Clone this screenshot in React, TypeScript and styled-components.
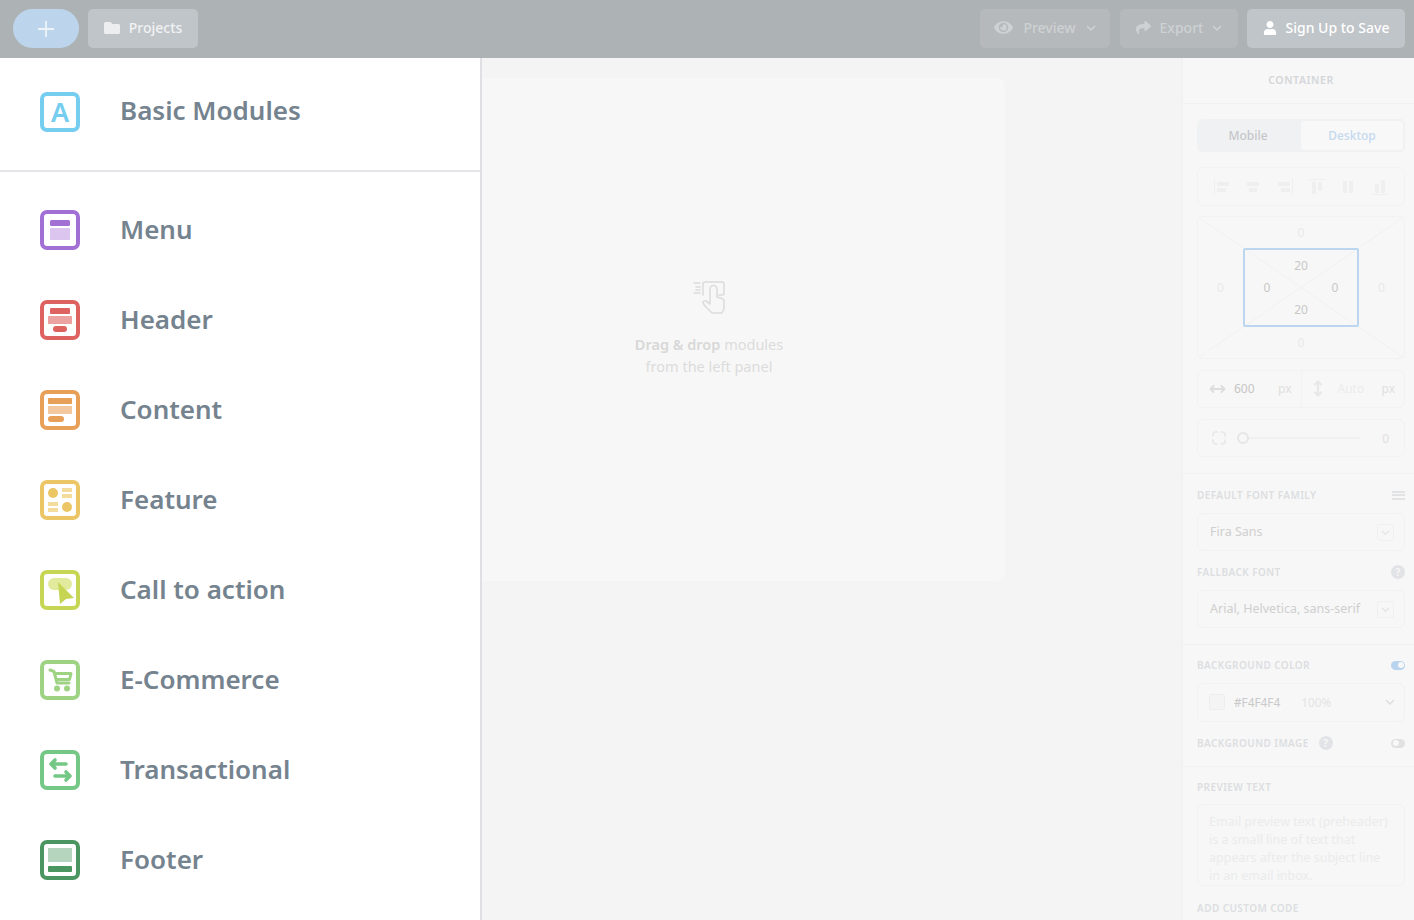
import * as React from "react"
import styled, { createGlobalStyle } from "styled-components"
import { FaEye, FaFolder, FaShare, FaUser } from "react-icons/fa"

const GlobalStyle = createGlobalStyle`
  html, body {
    margin: 0;
    height: 100%;
    overflow: hidden;
    background: #f4f4f4;
    font-family: "Noto Sans", "Open Sans", sans-serif;
  }
  * { box-sizing: border-box; }
`

const Page = styled.div`
  position: relative;
  width: 1414px;
  height: 920px;
  overflow: hidden;
  display: flex;
  flex-direction: column;
`

const TopBar = styled.header`
  height: 58px;
  flex: none;
  background: #adb2b5;
  display: flex;
  align-items: center;
  padding: 0 9px 1px 13px;
`

const PlusButton = styled.div`
  width: 66px;
  height: 39px;
  border-radius: 20px;
  background: #bdd5ec;
  display: flex;
  align-items: center;
  justify-content: center;
  margin-right: 9px;
`

const BarButton = styled.div<{ $w: number; $tone: "on" | "off"; $strong?: boolean; $gap?: number }>`
  width: ${(p) => p.$w}px;
  height: 39px;
  border-radius: 5px;
  padding-bottom: 2px;
  display: flex;
  align-items: center;
  justify-content: center;
  gap: ${(p) => p.$gap ?? 9}px;
  font-size: 14px;
  font-weight: 500;
  background: ${(p) => (p.$tone === "on" ? "#c0c5c9" : "#b5b9bc")};
  color: ${(p) => (p.$strong ? "#fff" : p.$tone === "on" ? "#f1f2f3" : "#ced1d3")};
`

const BarSpacer = styled.div`
  flex: 1;
`

const BarGap = styled.div<{ $w: number }>`
  width: ${(p) => p.$w}px;
`

const Workspace = styled.div`
  flex: 1;
  display: flex;
  min-height: 0;
`

const Canvas = styled.main`
  flex: 1;
  background: #f4f4f4;
  padding: 20px 0 0 237px;
  display: flex;
  justify-content: center;
  align-items: flex-start;
`

const EmailCard = styled.div`
  width: 592px;
  height: 503px;
  border-radius: 8px;
  background: #f7f7f7;
  padding-top: 202px;
  display: flex;
  flex-direction: column;
  align-items: center;
`

const DropText = styled.p`
  margin: 19px 0 0;
  text-align: center;
  font-size: 14.5px;
  line-height: 22px;
  color: #dcdcdc;
  b { font-weight: 600; color: #d8d8d8; }
`

const Drawer = styled.aside`
  position: absolute;
  left: 0;
  top: 58px;
  bottom: 0;
  width: 482px;
  background: #fff;
  border-right: 2px solid #dfe0e3;
`

const DrawerHead = styled.div`
  height: 114px;
  padding: 0 0 5px 40px;
  display: flex;
  align-items: center;
  gap: 40px;
  border-bottom: 2px solid #e5e5e9;
`

const ModuleList = styled.div`
  padding-top: 13px;
`

const ModuleRow = styled.div`
  height: 90px;
  padding-left: 40px;
  display: flex;
  align-items: center;
  gap: 40px;
`

const ModuleName = styled.span`
  font-size: 26px;
  font-weight: 600;
  padding-bottom: 3px;
  color: #75838f;
`

const Inspector = styled.aside`
  width: 233px;
  flex: none;
  background: #f7f7f7;
  border-left: 2px solid #f2f2f2;
  display: flex;
  flex-direction: column;
`

const InspectorTitle = styled.div`
  height: 46px;
  flex: none;
  display: flex;
  align-items: center;
  justify-content: center;
  padding: 0 0 2px 5px;
  font-size: 10.5px;
  font-weight: 600;
  letter-spacing: 0.6px;
  color: #d4d6d9;
  border-bottom: 1px solid #f1f1f1;
`

const Section = styled.section<{ $top: number; $bottom: number }>`
  padding: ${(p) => p.$top}px 9px ${(p) => p.$bottom}px 14px;
  border-bottom: 1px solid #f1f1f1;
  &:last-child { border-bottom: 0; }
`

const Tabs = styled.div`
  height: 33px;
  display: flex;
  border-radius: 6px;
  background: #f0f1f3;
`

const Tab = styled.div<{ $active?: boolean }>`
  flex: 1;
  display: flex;
  align-items: center;
  justify-content: center;
  padding-bottom: 1px;
  font-size: 12px;
  font-weight: 500;
  border-radius: 5px;
  color: ${(p) => (p.$active ? "#c5d9ef" : "#c4c6c9")};
  background: ${(p) => (p.$active ? "#f8f8f8" : "transparent")};
  border: ${(p) => (p.$active ? "2px solid #f0f1f3" : "0")};
`

const Frame = styled.div<{ $h: number; $mt: number }>`
  height: ${(p) => p.$h}px;
  margin-top: ${(p) => p.$mt}px;
  border: 1px solid #f2f2f2;
  border-radius: 6px;
  display: flex;
  align-items: center;
`

const AlignRow = styled(Frame)`
  justify-content: space-around;
  padding: 0 8px;
`

const BoxModel = styled(Frame)`
  position: relative;
  display: grid;
  grid-template-columns: 45px 116px 1fr;
  grid-template-rows: 31px 79px 1fr;
  align-items: center;
  justify-items: center;
`

const Diagonals = styled.svg`
  position: absolute;
  inset: 0;
  width: 100%;
  height: 100%;
`

const FaintNum = styled.span<{ $col: number; $row: number }>`
  grid-column: ${(p) => p.$col};
  grid-row: ${(p) => p.$row};
  font-size: 12px;
  color: #e9e9e9;
  z-index: 1;
`

const InnerBox = styled.div`
  grid-column: 2;
  grid-row: 2;
  width: 100%;
  height: 100%;
  z-index: 1;
  border: 2px solid #bdd6f0;
  border-radius: 2px;
  display: grid;
  grid-template-columns: 44px 1fr 44px;
  grid-template-rows: 1fr 1fr 1fr;
  padding: 4px 0;
  align-items: center;
  justify-items: center;
`

const BoxNum = styled.span<{ $col: number; $row: number }>`
  grid-column: ${(p) => p.$col};
  grid-row: ${(p) => p.$row};
  font-size: 12px;
  color: #c8c8c8;
`

const SizeCell = styled.div<{ $divider?: boolean }>`
  flex: 1;
  height: 100%;
  display: flex;
  align-items: center;
  gap: ${(p) => (p.$divider ? 15 : 8)}px;
  padding: 0 9px 1px 11px;
  border-left: ${(p) => (p.$divider ? "1px solid #f2f2f2" : "0")};
`

const SizeValue = styled.span<{ $faint?: boolean }>`
  flex: 1;
  font-size: 12px;
  color: ${(p) => (p.$faint ? "#ececec" : "#c6c6c6")};
`

const SizeUnit = styled.span`
  font-size: 12px;
  color: #e0e0e0;
`

const RadiusRow = styled(Frame)`
  padding: 0 15px 0 14px;
`

const SliderTrack = styled.div`
  position: relative;
  flex: 1;
  height: 2px;
  margin: 0 22px 0 11px;
  background: #f0f0f0;
`

const SliderKnob = styled.div`
  position: absolute;
  left: 0;
  top: -5px;
  width: 12px;
  height: 12px;
  border-radius: 50%;
  background: #f7f7f7;
  border: 2px solid #e6e6e6;
`

const LabelRow = styled.div<{ $mt?: number }>`
  height: 14px;
  margin-top: ${(p) => p.$mt ?? 0}px;
  display: flex;
  align-items: center;
  justify-content: space-between;
`

const LabelGroup = styled.div`
  display: flex;
  align-items: center;
  gap: 10px;
`

const Label = styled.span`
  font-size: 10px;
  font-weight: 600;
  letter-spacing: 0.42px;
  color: #dcdee1;
  white-space: nowrap;
`

const HelpDot = styled.span`
  width: 14px;
  height: 14px;
  border-radius: 50%;
  background: #e2e3e6;
  color: #f7f7f7;
  font-size: 10px;
  font-weight: 700;
  display: flex;
  align-items: center;
  justify-content: center;
`

const MenuLines = styled.span`
  width: 13px;
  height: 9px;
  border-top: 2px solid #e2e3e5;
  border-bottom: 2px solid #e2e3e5;
  position: relative;
  &::after {
    content: "";
    position: absolute;
    left: 0;
    right: 0;
    top: 1.5px;
    height: 2px;
    background: #e2e3e5;
  }
`

const Select = styled.div`
  height: 38px;
  margin-top: 11px;
  border: 1px solid #f2f2f2;
  border-radius: 6px;
  padding: 0 10px 0 12px;
  display: flex;
  align-items: center;
  justify-content: space-between;
  font-size: 12.5px;
  color: #cfcfcf;
  white-space: nowrap;
  line-height: 15px;
  span:first-child { padding-bottom: 2px; }
`

const Caret = styled.span`
  width: 17px;
  height: 17px;
  border: 1px solid #f0f0f0;
  border-radius: 3px;
  display: flex;
  align-items: center;
  justify-content: center;
`

const ColorField = styled.div`
  height: 39px;
  margin-top: 11px;
  border: 1px solid #f2f2f2;
  border-radius: 6px;
  padding: 0 9px 2px 11px;
  display: flex;
  align-items: center;
  font-size: 11.8px;
  color: #c9c9c9;
`

const Swatch = styled.span`
  width: 16px;
  height: 16px;
  margin-right: 9px;
  border: 1px solid #eeeeee;
  border-radius: 2px;
  background: #f4f4f4;
`

const Opacity = styled.span`
  flex: 1;
  margin-left: 21px;
  color: #e4e4e4;
`

const Toggle = styled.span<{ $on?: boolean }>`
  width: 14px;
  height: 9px;
  border-radius: 5px;
  background: ${(p) => (p.$on ? "#b9d4ef" : "#e0e1e3")};
  display: flex;
  align-items: center;
  justify-content: ${(p) => (p.$on ? "flex-end" : "flex-start")};
  padding: 0 1.5px;
  &::after {
    content: "";
    width: 6px;
    height: 6px;
    border-radius: 50%;
    background: #f7f7f7;
  }
`

const PreviewArea = styled.div`
  height: 82px;
  margin: 10px 0 15px;
  padding: 8px 11px 0;
  border: 1px solid #f2f2f2;
  border-radius: 6px;
  font-size: 12.5px;
  line-height: 18px;
  color: #ebebeb;
  overflow: hidden;
`

const Chevron = ({ color, size = 10 }: { color: string; size?: number }) => (
  <svg width={size} height={size} viewBox="0 0 10 10" fill="none">
    <path d="M1.5 3.5 5 7l3.5-3.5" stroke={color} strokeWidth="1.6" strokeLinecap="round" strokeLinejoin="round" />
  </svg>
)

const IconShell = ({ color, children }: { color: string; children: React.ReactNode }) => (
  <svg width="40" height="40" viewBox="0 0 40 40" style={{ flex: "none" }}>
    <rect x="2" y="2" width="36" height="36" rx="5" fill="#fff" stroke={color} strokeWidth="4" />
    {children}
  </svg>
)

const modules: { name: string; color: string; icon: React.ReactNode }[] = [
  {
    name: "Menu",
    color: "#a26fd4",
    icon: (
      <>
        <rect x="10" y="10" width="20" height="6" rx="1.5" fill="#a26fd4" />
        <rect x="10" y="18" width="20" height="12" fill="#dcc5ee" />
      </>
    ),
  },
  {
    name: "Header",
    color: "#de6360",
    icon: (
      <>
        <rect x="10" y="8" width="20" height="6" rx="1" fill="#de6360" />
        <rect x="8" y="16" width="24" height="8" fill="#eca2a0" />
        <rect x="13" y="26" width="14" height="6" rx="3" fill="#de6360" />
      </>
    ),
  },
  {
    name: "Content",
    color: "#e89f58",
    icon: (
      <>
        <rect x="8" y="8" width="24" height="6" rx="1" fill="#e89f58" />
        <rect x="8" y="16" width="24" height="8" fill="#f3c79f" />
        <rect x="8" y="26" width="16" height="6" rx="3" fill="#e89f58" />
      </>
    ),
  },
  {
    name: "Feature",
    color: "#ecc564",
    icon: (
      <>
        <circle cx="13" cy="13" r="5" fill="#ecc564" />
        <rect x="22" y="8" width="10" height="4" fill="#f4dc9c" />
        <rect x="22" y="14" width="10" height="4" fill="#f4dc9c" />
        <rect x="8" y="22" width="10" height="4" fill="#f4dc9c" />
        <rect x="8" y="28" width="10" height="4" fill="#f4dc9c" />
        <circle cx="27" cy="27" r="5" fill="#ecc564" />
      </>
    ),
  },
  {
    name: "Call to action",
    color: "#c6d654",
    icon: (
      <>
        <rect x="8" y="8" width="24" height="12" rx="6" fill="#e2ea9e" />
        <path d="M18 12 34 28l-8 1-6 5z" fill="#c6d654" />
      </>
    ),
  },
  {
    name: "E-Commerce",
    color: "#9ed384",
    icon: (
      <>
        <path d="M10 10l4 1.500 3 11.500h12" fill="none" stroke="#9ed384" strokeWidth="3" strokeLinecap="round" strokeLinejoin="round" />
        <path d="M15 13.500h16l-1.500 6H16.500" fill="none" stroke="#9ed384" strokeWidth="3" strokeLinejoin="round" />
        <circle cx="17" cy="28.500" r="3" fill="#9ed384" />
        <circle cx="27" cy="28.500" r="3" fill="#9ed384" />
      </>
    ),
  },
  {
    name: "Transactional",
    color: "#74c785",
    icon: (
      <g fill="none" stroke="#74c785" strokeWidth="3.6" strokeLinecap="round" strokeLinejoin="round">
        <path d="M11 14h15M15 10l-4 4 4 4" />
        <path d="M30 26H15M26 22l4 4-4 4" />
      </g>
    ),
  },
  {
    name: "Footer",
    color: "#4b9560",
    icon: (
      <>
        <rect x="8" y="8" width="24" height="14" fill="#b6d5bf" />
        <rect x="8" y="26" width="24" height="6" rx="1" fill="#4b9560" />
      </>
    ),
  },
]

const alignIcons = [
  "M0 0h1v16H0zM3 3h12v4H3zM3 9h9v4H3z",
  "M2 3h12v4H2zM4 9h8v4H4z",
  "M15 0h1v16h-1zM1 3h12v4H1zM4 9h9v4H4z",
  "M0 0h16v1H0zM3 3h4v12H3zM9 3h4v9H9z",
  "M3 2h4v12H3zM9 2h4v12H9z",
  "M0 15h16v1H0zM3 5h4v9H3zM9 1h4v13H9z",
]

const App = () => (
  <Page>
    <GlobalStyle />
    <TopBar>
      <PlusButton>
        <svg width="18" height="18" viewBox="0 0 18 18">
          <path d="M9 1v16M1 9h16" stroke="#eef3f8" strokeWidth="1.8" />
        </svg>
      </PlusButton>
      <BarButton $w={110} $tone="on">
        <FaFolder size={16} color="#eceeef" />
        Projects
      </BarButton>
      <BarSpacer />
      <BarButton $w={130} $tone="off" $gap={10}>
        <FaEye size={19} color="#ced1d3" />
        Preview
        <Chevron color="#ced1d3" />
      </BarButton>
      <BarGap $w={10} />
      <BarButton $w={118} $tone="off">
        <FaShare size={15} color="#ced1d3" />
        Export
        <Chevron color="#ced1d3" />
      </BarButton>
      <BarGap $w={9} />
      <BarButton $w={158} $tone="on" $strong>
        <FaUser size={14} color="#fff" />
        Sign Up to Save
      </BarButton>
    </TopBar>

    <Workspace>
      <Canvas>
        <EmailCard>
          <svg width="34" height="34" viewBox="0 0 34 34" fill="none" stroke="#dcdcdc" strokeWidth="1.6" strokeLinecap="round" strokeLinejoin="round">
            <path d="M2 3h6M4 7h4M2 13h6M4 10h4" />
            <path d="M11 15V4a2 2 0 0 1 2-2h17a2 2 0 0 1 2 2v9a2 2 0 0 1-2 2h-3" />
            <path d="M18 24V9a3.500 3.500 0 0 1 7 0v8l6 2a2 2 0 0 1 1 2v8l-2 4H20l-7-7-2-3a2 2 0 0 1 3-2l4 3z" fill="#f7f7f7" />
          </svg>
          <DropText>
            <b>Drag &amp; drop</b> modules
            <br />
            from the left panel
          </DropText>
        </EmailCard>
      </Canvas>

      <Inspector>
        <InspectorTitle>CONTAINER</InspectorTitle>
        <Section $top={15} $bottom={16}>
          <Tabs>
            <Tab>Mobile</Tab>
            <Tab $active>Desktop</Tab>
          </Tabs>
          <AlignRow $h={39} $mt={15}>
            {alignIcons.map((d) => (
              <svg key={d} width="16" height="16" viewBox="0 0 16 16" fill="#efefef">
                <path d={d} />
              </svg>
            ))}
          </AlignRow>
          <BoxModel $h={143} $mt={10}>
            <Diagonals viewBox="0 0 207 143" preserveAspectRatio="none">
              <path d="M0 0 207 143M207 0 0 143" stroke="#f1f1f1" strokeWidth="1" />
            </Diagonals>
            <FaintNum $col={2} $row={1}>0</FaintNum>
            <FaintNum $col={1} $row={2}>0</FaintNum>
            <InnerBox>
              <BoxNum $col={2} $row={1}>20</BoxNum>
              <BoxNum $col={1} $row={2}>0</BoxNum>
              <BoxNum $col={3} $row={2}>0</BoxNum>
              <BoxNum $col={2} $row={3}>20</BoxNum>
            </InnerBox>
            <FaintNum $col={3} $row={2}>0</FaintNum>
            <FaintNum $col={2} $row={3}>0</FaintNum>
          </BoxModel>
          <Frame $h={38} $mt={11}>
            <SizeCell>
              <svg width="17" height="10" viewBox="0 0 17 10" fill="none" stroke="#dddddd" strokeWidth="2" strokeLinecap="round" strokeLinejoin="round">
                <path d="M1.500 5h14M4.500 2 1.500 5l3 3M12.500 2l3 3-3 3" />
              </svg>
              <SizeValue>600</SizeValue>
              <SizeUnit>px</SizeUnit>
            </SizeCell>
            <SizeCell $divider>
              <svg width="10" height="17" viewBox="0 0 10 17" fill="none" stroke="#e8e8e8" strokeWidth="2.200" strokeLinecap="round" strokeLinejoin="round">
                <path d="M5 1.500v14M2 4.500l3-3 3 3M2 12.500l3 3 3-3" />
              </svg>
              <SizeValue $faint>Auto</SizeValue>
              <SizeUnit>px</SizeUnit>
            </SizeCell>
          </Frame>
          <RadiusRow $h={38} $mt={11}>
            <svg width="14" height="14" viewBox="0 0 14 14" fill="none" stroke="#e8e8e8" strokeWidth="1.700">
              <path d="M5.500 1H4a3 3 0 0 0-3 3v1.500M8.500 1H10a3 3 0 0 1 3 3v1.500M5.500 13H4a3 3 0 0 1-3-3V8.500M8.500 13H10a3 3 0 0 0 3-3V8.500" />
            </svg>
            <SliderTrack>
              <SliderKnob />
            </SliderTrack>
            <SizeUnit>0</SizeUnit>
          </RadiusRow>
        </Section>

        <Section $top={14} $bottom={16}>
          <LabelRow>
            <Label>DEFAULT FONT FAMILY</Label>
            <MenuLines />
          </LabelRow>
          <Select>
            <span>Fira Sans</span>
            <Caret><Chevron color="#e6e6e6" size={9} /></Caret>
          </Select>
          <LabelRow $mt={14}>
            <Label>FALLBACK FONT</Label>
            <HelpDot>?</HelpDot>
          </LabelRow>
          <Select>
            <span>Arial, Helvetica, sans-serif</span>
            <Caret><Chevron color="#e6e6e6" size={9} /></Caret>
          </Select>
        </Section>

        <Section $top={13} $bottom={16}>
          <LabelRow>
            <Label>BACKGROUND COLOR</Label>
            <Toggle $on />
          </LabelRow>
          <ColorField>
            <Swatch />
            #F4F4F4
            <Opacity>100%</Opacity>
            <Chevron color="#dedede" />
          </ColorField>
          <LabelRow $mt={14}>
            <LabelGroup>
              <Label>BACKGROUND IMAGE</Label>
              <HelpDot>?</HelpDot>
            </LabelGroup>
            <Toggle />
          </LabelRow>
        </Section>

        <Section $top={13} $bottom={0}>
          <LabelRow>
            <Label>PREVIEW TEXT</Label>
          </LabelRow>
          <PreviewArea>
            Email preview text (preheader) is a small line of text that appears after the subject line in an email inbox.
          </PreviewArea>
          <LabelRow>
            <Label>ADD CUSTOM CODE</Label>
          </LabelRow>
        </Section>
      </Inspector>
    </Workspace>

    <Drawer>
      <DrawerHead>
        <IconShell color="#75cdf0">
          <text x="20" y="30" textAnchor="middle" fontSize="27" fontWeight="600" fill="#75cdf0" fontFamily="Noto Sans, sans-serif">A</text>
        </IconShell>
        <ModuleName>Basic Modules</ModuleName>
      </DrawerHead>
      <ModuleList>
        {modules.map((m) => (
          <ModuleRow key={m.name}>
            <IconShell color={m.color}>{m.icon}</IconShell>
            <ModuleName>{m.name}</ModuleName>
          </ModuleRow>
        ))}
      </ModuleList>
    </Drawer>
  </Page>
)

export default App
